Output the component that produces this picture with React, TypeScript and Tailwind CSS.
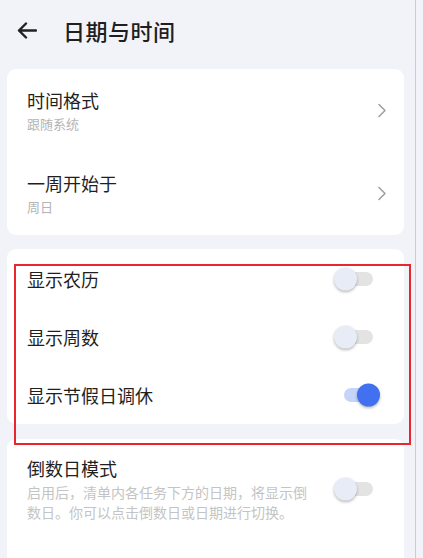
import React from 'react';

const font = { fontFamily: '"Noto Sans CJK SC", "Noto Sans", sans-serif' };

const Chevron = () => (
  <svg width="10" height="15" viewBox="0 0 10 15" fill="none">
    <path d="M2 1.5 L8 7.5 L2 13.5" stroke="#a0a0a0" strokeWidth="1.6" strokeLinecap="round" strokeLinejoin="round" />
  </svg>
);

const Toggle = ({ on }: { on: boolean }) => (
  <div className={`relative w-[29px] h-[14px] rounded-full ${on ? 'bg-[#c6d4fa]' : 'bg-[#e3e3e3]'}`}>
    <div
      className={`absolute top-1/2 -translate-y-1/2 size-[23px] rounded-full shadow-[0_1.5px_3px_rgba(0,0,0,0.28)] ${
        on ? 'left-[13px] bg-[#4171f0]' : 'left-[-10px] bg-[#e8ecf6]'
      }`}
    />
  </div>
);

const NavRow = ({ title, value }: { title: string; value: string }) => (
  <div className="h-[83px] flex items-center justify-between pl-[20px] pr-[17px]">
    <div className="flex flex-col">
      <span className="text-[18px] leading-[26px] text-[#1f1f1f]">{title}</span>
      <span className="text-[13px] leading-[22px] text-[#b4b4b4]">{value}</span>
    </div>
    <Chevron />
  </div>
);

const SwitchRow = ({ title, on }: { title: string; on: boolean }) => (
  <div className="h-[58px] flex items-center justify-between pl-[20px] pr-[31px]">
    <span className="text-[18px] leading-[26px] text-[#1f1f1f]">{title}</span>
    <Toggle on={on} />
  </div>
);

export default function App() {
  return (
    <div className="relative w-[423px] h-[558px] overflow-hidden bg-[#f2f3f8] flex" style={font}>
      <div className="w-[415px] flex flex-col">
        {/* header */}
        <div className="h-[60px] flex items-center">
          <svg className="ml-[17px]" width="20" height="17" viewBox="0 0 20 17" fill="none">
            <path d="M19 8.5 H2 M9 1.5 L2 8.5 L9 15.5" stroke="#222" strokeWidth="2.4" strokeLinecap="round" strokeLinejoin="round" />
          </svg>
          <h1 className="ml-[26px] text-[22px] leading-[30px] font-medium text-[#1f1f1f] tracking-[0.5px]">日期与时间</h1>
        </div>

        <div className="ml-[7px] mr-[11px] mt-[9px] bg-white rounded-[9px]">
          <NavRow title="时间格式" value="跟随系统" />
          <NavRow title="一周开始于" value="周日" />
        </div>

        <div className="ml-[7px] mr-[11px] mt-[14px] bg-white rounded-[9px] pt-[1px] h-[175px]">
          <SwitchRow title="显示农历" on={false} />
          <SwitchRow title="显示周数" on={false} />
          <SwitchRow title="显示节假日调休" on={true} />
        </div>

        <div className="ml-[7px] mr-[11px] mt-[15px] bg-white rounded-t-[9px] flex-1 pt-[16px]">
          <div className="flex items-center justify-between pl-[20px] pr-[31px]">
            <div className="flex flex-col w-[285px]">
              <span className="text-[18px] leading-[26px] text-[#1f1f1f]">倒数日模式</span>
              <p className="mt-[1px] text-[14px] leading-[20px] text-[#c4c4c4]">
                启用后，清单内各任务下方的日期，将显示倒数日。你可以点击倒数日或日期进行切换。
              </p>
            </div>
            <Toggle on={false} />
          </div>
        </div>
      </div>
      <div className="w-px h-full bg-[#cbcbd0]" />

      {/* highlight frame */}
      <div className="absolute left-[14px] top-[264px] w-[397px] h-[181px] border-2 border-[#e8262c] pointer-events-none" />
    </div>
  );
}
